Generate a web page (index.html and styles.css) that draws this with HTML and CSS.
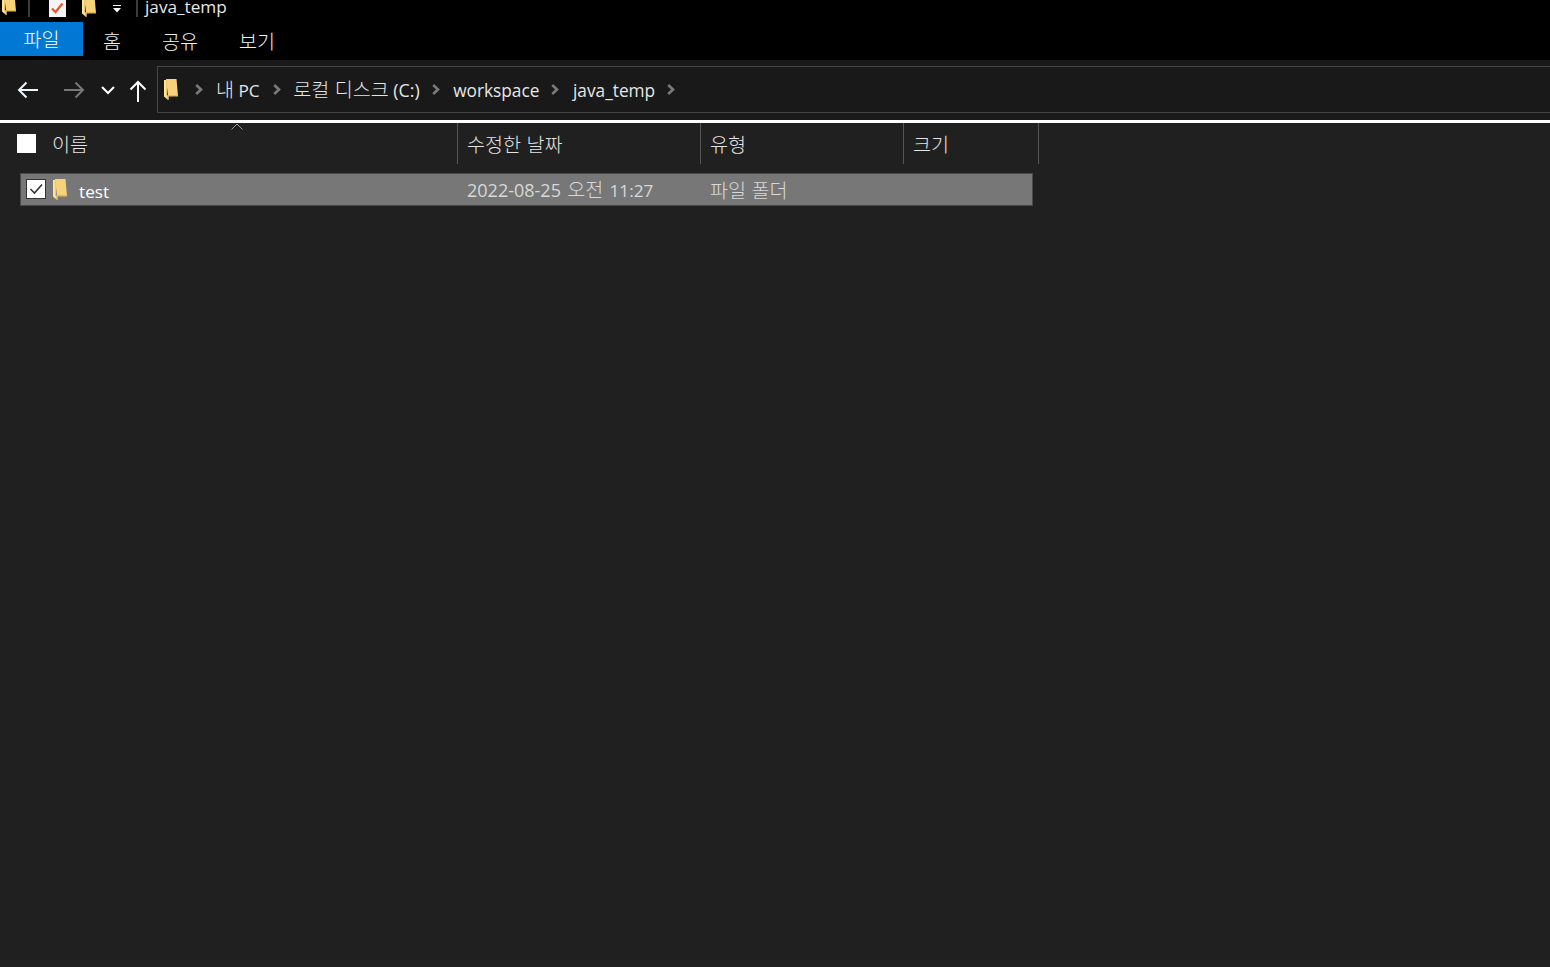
FILE: index.html
```html
<!DOCTYPE html>
<html lang="ko">
<head>
<meta charset="utf-8">
<title>java_temp</title>
<link rel="stylesheet" href="styles.css">
</head>
<body>
<svg class="defs" width="0" height="0" aria-hidden="true">
  <defs>
    <symbol id="folder" viewBox="0 0 14 21">
      <path d="M2 0H12.500L14 17H4Z" fill="#f6d27a"/>
      <path d="M4 16H14V17.500H4Z" fill="#e8b956"/>
      <path d="M0 1H3V16L4.500 17V21L3 20L0 17.500Z" fill="#fde49a"/>
      <path d="M3 1V16L4.500 17V21H3.500V17.500L2.500 17V1Z" fill="#d9a748"/>
    </symbol>
    <symbol id="chev" viewBox="0 0 8 11">
      <path d="M1.200 1L6 5.500L1.200 10" fill="none" stroke="#7a7a7a" stroke-width="2.600"/>
    </symbol>
  </defs>
</svg>
<header class="titlebar">
  <svg class="qa-folder-a"><use href="#folder"/></svg>
  <span class="qa-sep"></span>
  <span class="qa-check">
    <svg width="17" height="17" viewBox="0 0 17 17"><path d="M3 8.500L6.500 12L13.500 3.500" fill="none" stroke="#e8562a" stroke-width="2.200"/></svg>
  </span>
  <svg class="qa-folder-b"><use href="#folder"/></svg>
  <svg class="qa-down" width="10" height="8" viewBox="0 0 10 8"><path d="M1 0H9V1H1ZM1 3H9L5 7.500Z" fill="#fff"/></svg>
  <span class="qa-sep qa-sep-b"></span>
  <span class="title-text">java_temp</span>
</header>
<nav class="tabs">
  <span class="tab tab-active ko">파일</span>
  <span class="tab tab-home ko">홈</span>
  <span class="tab tab-share ko">공유</span>
  <span class="tab tab-view ko">보기</span>
</nav>
<section class="navbar">
  <svg class="nav-back" width="22" height="18" viewBox="0 0 22 18"><path d="M21 9H2M9.500 1.500L2 9L9.500 16.500" fill="none" stroke="#eef4fb" stroke-width="2"/></svg>
  <svg class="nav-forward" width="22" height="18" viewBox="0 0 22 18"><path d="M1 9H20M12.500 1.500L20 9L12.500 16.500" fill="none" stroke="#777" stroke-width="2"/></svg>
  <svg class="nav-recent" width="14" height="10" viewBox="0 0 14 10"><path d="M1 2L7 8L13 2" fill="none" stroke="#fff" stroke-width="2"/></svg>
  <svg class="nav-up" width="18" height="22" viewBox="0 0 18 22"><path d="M9 22V2M1.500 9.500L9 2L16.500 9.500" fill="none" stroke="#fff" stroke-width="2"/></svg>
  <div class="address">
    <svg class="addr-folder"><use href="#folder"/></svg>
    <svg class="chev chev-first"><use href="#chev"/></svg>
    <span class="crumb"><span class="ko">내</span> PC</span>
    <svg class="chev chev-pc"><use href="#chev"/></svg>
    <span class="crumb"><span class="ko">로컬 디스크</span> <span class="crumb-drive">(C:)</span></span>
    <svg class="chev"><use href="#chev"/></svg>
    <span class="crumb crumb-latin">workspace</span>
    <svg class="chev"><use href="#chev"/></svg>
    <span class="crumb crumb-latin">java_temp</span>
    <svg class="chev"><use href="#chev"/></svg>
  </div>
</section>
<main class="content">
  <div class="headers">
    <div class="col col-name">
      <span class="head-check"></span>
      <span class="head-label ko">이름</span>
      <svg class="sort" width="14" height="7" viewBox="0 0 14 7"><path d="M1.500 6.500L7 1L12.500 6.500" fill="none" stroke="#9a9a9a" stroke-width="1"/></svg>
    </div>
    <div class="col col-date"><span class="head-label ko">수정한 날짜</span></div>
    <div class="col col-type"><span class="head-label ko">유형</span></div>
    <div class="col col-size"><span class="head-label ko">크기</span></div>
  </div>
  <div class="row">
    <div class="cell-name">
      <span class="row-check">
        <svg width="18" height="18" viewBox="0 0 18 18"><path d="M3.500 9L7.500 13L15 4.500" fill="none" stroke="#333" stroke-width="1.600"/></svg>
      </span>
      <svg class="row-folder"><use href="#folder"/></svg>
      <span class="row-title">test</span>
    </div>
    <div class="cell-date">2022-08-25 <span class="ko">오전</span> <span class="cell-time">11:27</span></div>
    <div class="cell-type ko">파일 폴더</div>
  </div>
</main>
</body>
</html>
```
FILE: styles.css
```css
* { box-sizing: border-box; }
html, body { margin: 0; height: 100%; }
body {
  background: #202020;
  color: #fff;
  font-family: "Open Sans", "Noto Sans CJK KR", sans-serif;
  font-size: 17.2px;
  overflow: hidden;
  display: flex;
  flex-direction: column;
}
.defs { position: absolute; }
.ko {
  font-family: "Noto Sans CJK KR", sans-serif;
  font-size: 19.6px;
  font-weight: 300;
}

.titlebar {
  height: 22px;
  background: #000;
  display: flex;
  align-items: flex-start;
  flex: none;
  overflow: hidden;
}
.qa-folder-a { width: 14px; height: 21px; margin: -6px 0 0 2px; flex: none; }
.qa-sep { width: 2px; height: 17px; background: #3c3c3c; margin: 0 0 0 12px; flex: none; }
.qa-check {
  width: 17px; height: 17px; margin: 0 0 0 19px;
  background: #f4f4f4; flex: none; display: flex; align-items: center; justify-content: center;
  overflow: hidden;
}
.qa-folder-b { width: 14px; height: 21px; margin: -4px 0 0 16px; flex: none; }
.qa-down { margin: 5px 0 0 16px; flex: none; }
.qa-sep-b { margin-left: 14px; }
.title-text { margin: 0 0 0 7px; line-height: 14px; color: #e8e8e8; }

.tabs {
  height: 38px;
  background: #000;
  display: flex;
  align-items: flex-start;
  flex: none;
}
.tab { height: 34px; line-height: 34px; color: #f0f0f0; }
.tab-active { width: 83px; background: #0078d4; color: #fff; text-align: center; }
.tab-home { margin: 2px 0 0 20px; }
.tab-share { margin: 2px 0 0 41px; }
.tab-view { margin: 2px 0 0 41px; }

.navbar {
  height: 60px;
  background: #191919;
  display: flex;
  align-items: center;
  flex: none;
}
.nav-back { margin: 0 0 0 17px; flex: none; }
.nav-forward { margin: 0 0 0 24px; flex: none; }
.nav-recent { margin: 0 0 0 16px; flex: none; }
.nav-up { margin: 2px 0 0 14px; flex: none; }
.address {
  margin: 6px -10px 0 10px;
  height: 47px;
  align-self: flex-start;
  flex: 1;
  border: 1px solid #434343;
  display: flex;
  align-items: center;
  color: #e6e6e6;
}
.addr-folder { width: 14px; height: 21px; margin: 0 0 0 6px; flex: none; }
.chev { width: 8px; height: 11px; margin: 0 12px; flex: none; }
.chev-first { margin-left: 17px; margin-right: 13px; }
.chev-pc { margin-left: 13px; margin-right: 12.5px; }
.crumb { line-height: 24px; white-space: nowrap; }
.crumb-drive { font-size: 17.8px; }
.crumb-latin { padding-top: 2px; margin-left: 1.5px; font-size: 17.3px; }

.content { flex: 1; border-top: 3px solid #fff; min-height: 0; }
.headers { display: flex; height: 41px; }
.col { height: 41px; border-right: 1px solid #555; display: flex; align-items: center; position: relative; }
.col-name { width: 458px; padding-left: 17px; }
.col-date { width: 243px; padding-left: 9px; }
.col-type { width: 203px; padding-left: 9px; }
.col-size { width: 135px; padding-left: 9px; }
.head-check { width: 19px; height: 19px; background: #fff; flex: none; margin-right: 16px; margin-top: -1px; }
.head-label { color: #e4e4e4; line-height: 24px; }
.sort { position: absolute; left: 230px; top: 0; }

.row {
  margin: 9px 0 0 20px;
  width: 1013px;
  height: 33px;
  background: #777;
  border: 1px solid #4a4a4a;
  display: flex;
  align-items: center;
}
.cell-name { width: 446px; display: flex; align-items: center; flex: none; }
.row-check {
  width: 20px; height: 20px; margin-left: 5px; background: #fff; border: 1px solid #333;
  flex: none; display: flex; align-items: center; justify-content: center;
  margin-top: -1px;
}
.row-folder { width: 14px; height: 21px; margin: -1px 0 0 7px; flex: none; }
.row-title { margin: 4px 0 0 12px; color: #fff; line-height: 24px; }
.cell-date { width: 243px; flex: none; color: #d8d8d8; font-size: 18px; line-height: 24px; word-spacing: 1.6px; padding-top: 1px; }
.cell-time { font-size: 17.2px; }
.cell-type { color: #d8d8d8; line-height: 24px; }
```
